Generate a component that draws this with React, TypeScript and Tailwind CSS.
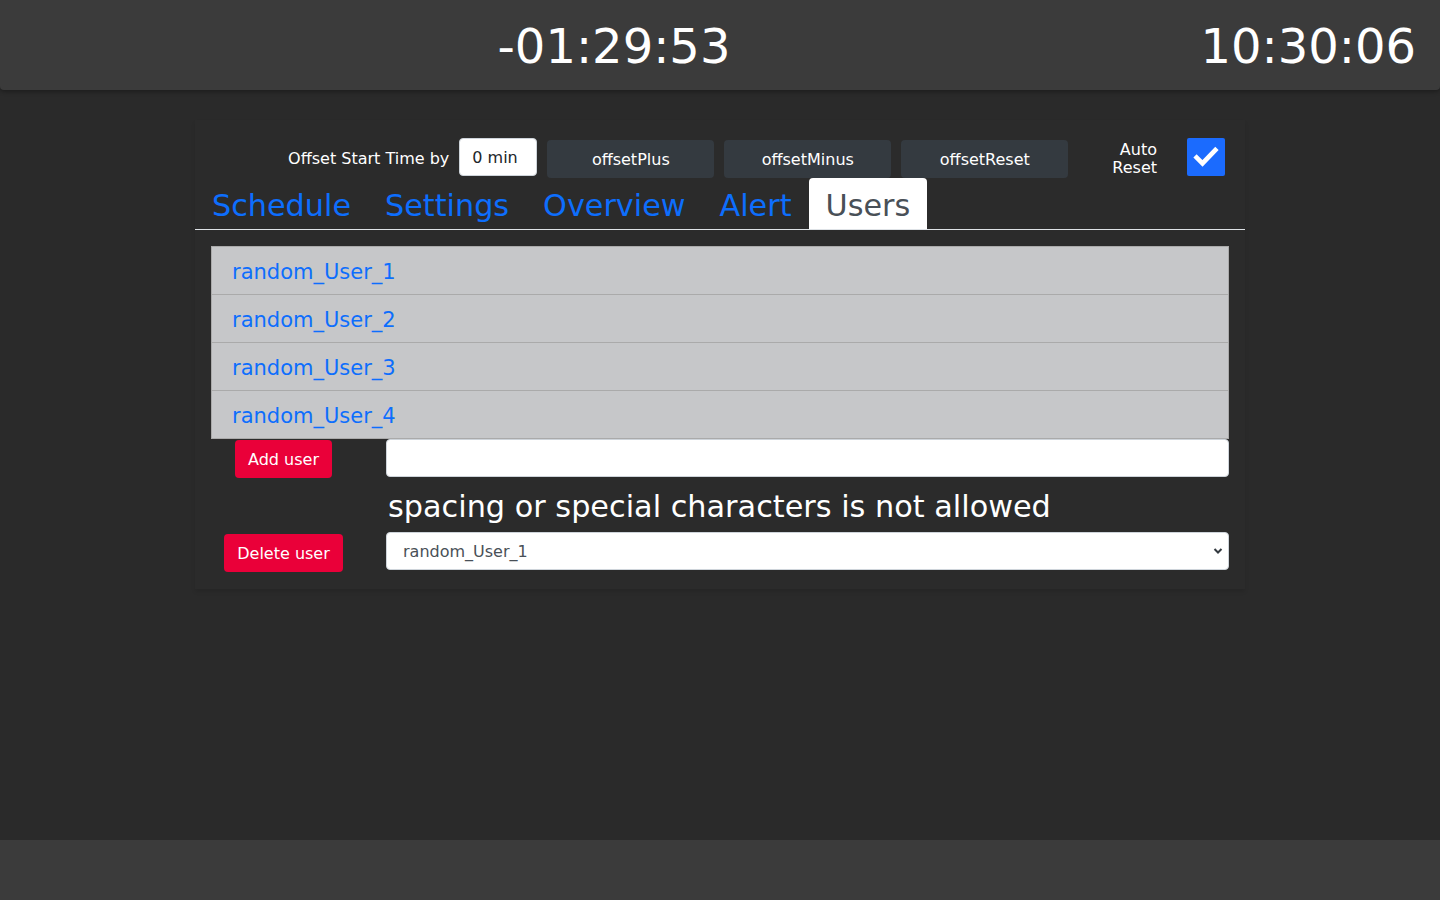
import { useState } from "react";

const users = ["random_User_1", "random_User_2", "random_User_3", "random_User_4"];
const tabs = ["Schedule", "Settings", "Overview", "Alert", "Users"];

export default function App() {
  const [active, setActive] = useState("Users");
  const [newUser, setNewUser] = useState("");
  const [autoReset, setAutoReset] = useState(true);

  return (
    <div className="min-h-screen flex flex-col bg-[#2a2a2a] text-white font-['DejaVu_Sans',sans-serif]">
      <header className="h-[90px] bg-[#3b3b3b] rounded-b-[4px] shadow-[0_2px_4px_rgba(0,0,0,0.3)] flex items-center justify-end gap-[470px] pr-[24px]">
        <span className="text-[48px] leading-none pt-[2px]">-01:29:53</span>
        <span className="text-[48px] leading-none pt-[2px]">10:30:06</span>
      </header>

      <main className="flex-1 pt-[30px]">
        <div className="mx-auto w-[1050px] pt-[18px] pb-[17px] bg-[#2b2b2b] shadow-[0_3px_4px_rgba(0,0,0,0.1)]">
          <div className="flex items-start justify-end h-[40px] pr-[20px]">
            <span className="text-[16px] leading-[38px] mr-[10px] pt-[2px]">Offset Start Time by</span>
            <input
              readOnly
              value="0 min"
              className="w-[78px] h-[38px] rounded-[4px] bg-white text-[#212529] text-[16px] px-[12px] border border-[#ced4da] outline-none"
            />
            <div className="flex gap-[10px] ml-[10px] mt-[2px]">
              {["offsetPlus", "offsetMinus", "offsetReset"].map((b) => (
                <button key={b} className="w-[167px] h-[38px] rounded-[4px] bg-[#343a40] text-[16px] text-white pt-[1px]">
                  {b}
                </button>
              ))}
            </div>
            <div className="ml-[44px] text-right text-[16px] leading-[18px] pt-[3px]">
              Auto
              <br />
              Reset
            </div>
            <button
              onClick={() => setAutoReset(!autoReset)}
              className="ml-[30px] w-[38px] h-[38px] rounded-[2px] bg-[#1b6bfe] flex items-center justify-center"
            >
              {autoReset && (
                <svg width="28" height="28" viewBox="0 0 24 24" fill="none" stroke="white" strokeWidth="4" strokeLinecap="square">
                  <path d="M4 12.5l5 5L20 6" />
                </svg>
              )}
            </button>
          </div>

          <nav className="flex border-b border-[#dee2e6]">
            {tabs.map((t) => (
              <button
                key={t}
                onClick={() => setActive(t)}
                className={
                  t === active
                    ? "px-[17px] pt-[9px] pb-[5px] text-[30.25px] leading-[37px] bg-white text-[#495057] rounded-t-[4px]"
                    : "px-[17px] pt-[9px] pb-[5px] text-[30.25px] leading-[37px] text-[#0d6efd]"
                }
              >
                {t}
              </button>
            ))}
          </nav>

          <div className="px-[16px] pt-[16px]">
            <ul className="bg-[#c6c7c9] border border-[#aaaaaa]">
              {users.map((u, i) => (
                <li
                  key={u}
                  className={
                    i === 0
                      ? "h-[47px] px-[20px] pt-[4px] flex items-center text-[21px] text-[#0d6efd]"
                      : "h-[48px] px-[20px] pt-[4px] flex items-center text-[21px] text-[#0d6efd] border-t border-[#aaaaaa]"
                  }
                >
                  {u}
                </li>
              ))}
            </ul>

            <div className="grid grid-cols-[145px_843px] gap-x-[30px]">
              <div className="flex justify-center pt-[1px]">
                <button className="h-[38px] px-[13px] pt-[1px] rounded-[4px] bg-[#ea0039] text-[16px] text-white">Add user</button>
              </div>
              <input
                value={newUser}
                onChange={(e) => setNewUser(e.target.value)}
                className="h-[38px] rounded-[4px] bg-white border border-[#ced4da] px-[12px] text-[16px] text-[#212529] outline-none"
              />

              <div />
              <p className="mt-[11px] text-[30.3px] leading-[36px] pl-[2px]">spacing or special characters is not allowed</p>

              <div className="flex justify-center pt-[9px]">
                <button className="h-[38px] px-[13px] pt-[1px] rounded-[4px] bg-[#ea0039] text-[16px] text-white">Delete user</button>
              </div>
              <div className="relative mt-[7px]">
                <select className="w-full h-[38px] appearance-none rounded-[4px] bg-white border border-[#ced4da] pl-[16px] pt-[1px] text-[16px] text-[#495057] outline-none">
                  {users.map((u) => (
                    <option key={u}>{u}</option>
                  ))}
                </select>
                <svg
                  className="absolute right-[6px] top-[15px] pointer-events-none"
                  width="10"
                  height="8"
                  viewBox="0 0 10 8"
                  fill="none"
                  stroke="#343a40"
                  strokeWidth="2"
                >
                  <path d="M1.5 2l3.5 3.5L8.5 2" />
                </svg>
              </div>
            </div>
          </div>
        </div>
      </main>

      <footer className="h-[60px] bg-[#3b3b3b]" />
    </div>
  );
}
